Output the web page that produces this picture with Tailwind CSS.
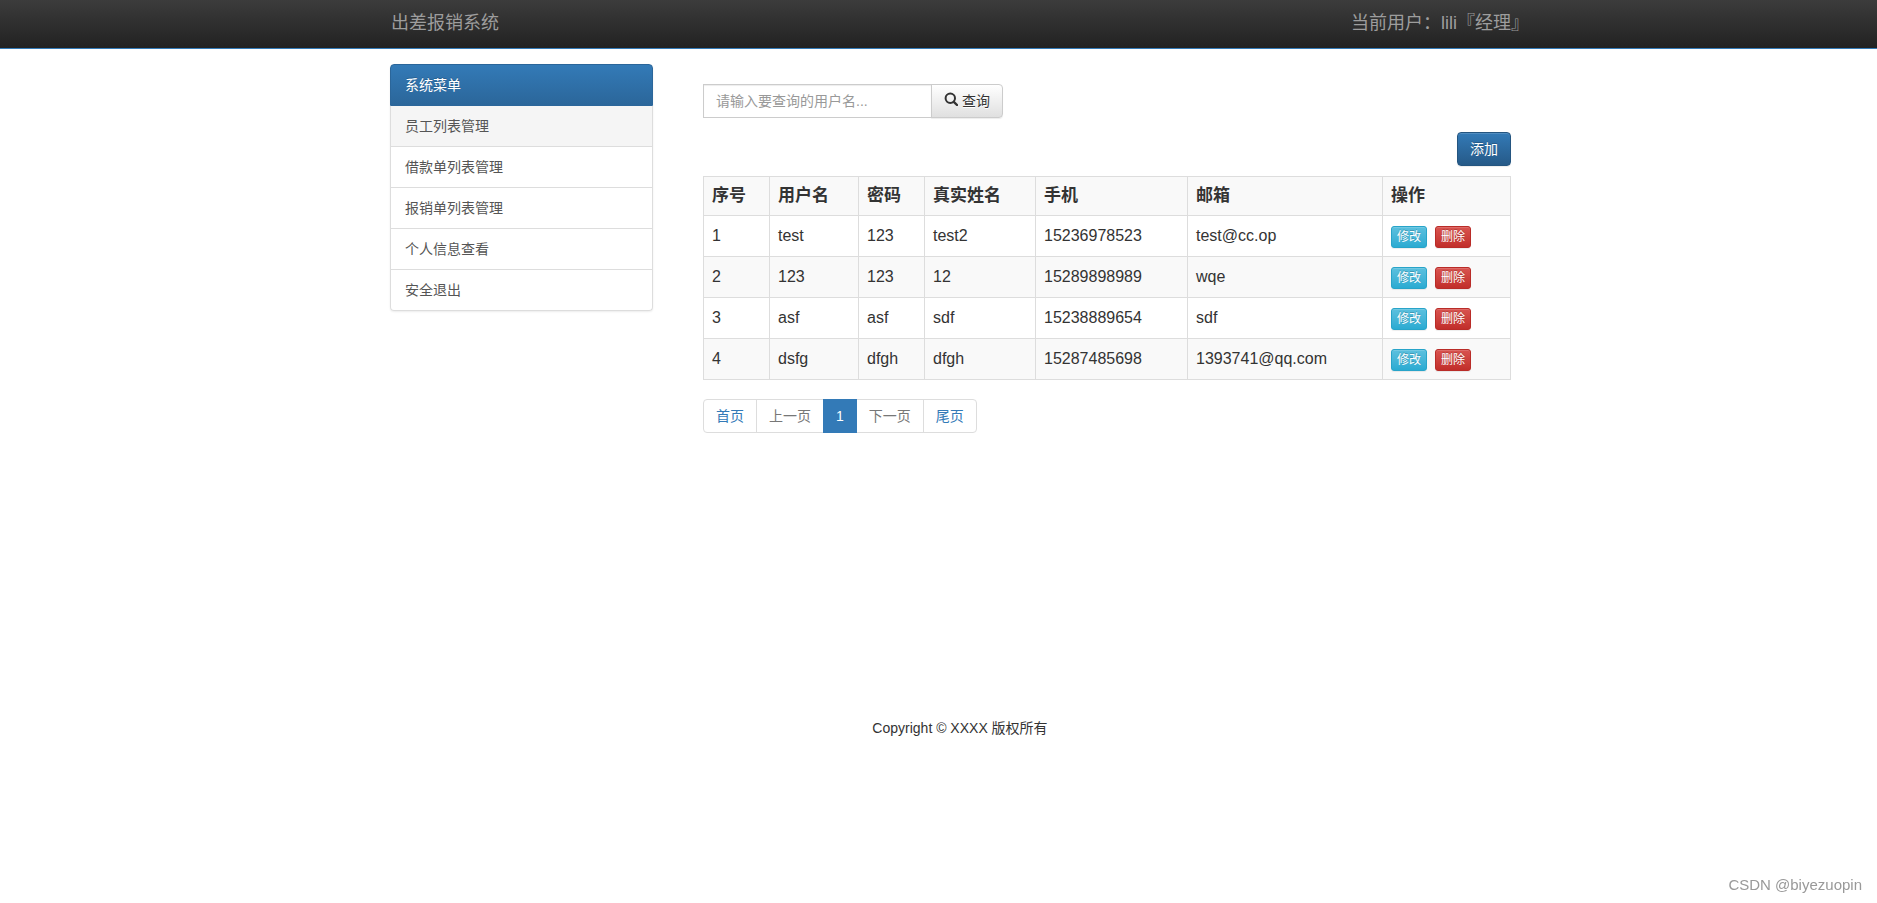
<!DOCTYPE html>
<html lang="zh-CN">
<head>
<meta charset="utf-8">
<title>出差报销系统</title>
<script src="https://cdn.jsdelivr.net/npm/@tailwindcss/browser@4"></script>
</head>
<body class="min-h-screen bg-white font-['Liberation_Sans','Noto_Sans_CJK_SC',sans-serif] text-sm leading-5 text-[#333]">
<header class="border-b border-[#337ab7] bg-linear-to-b from-[#3c3c3c] to-[#222] pl-[43px]">
  <nav class="mx-auto flex h-12 max-w-[1170px] items-center justify-between px-4 pb-[2px] text-lg leading-6 text-[#9d9d9d]">
    <a href="#">出差报销系统</a>
    <p>当前用户：lili『经理』</p>
  </nav>
</header>

<div class="pl-[43px]">
  <div class="mx-auto flex max-w-[1170px] items-start px-[15px] pt-[15px]">
    <aside class="w-[263px] shrink-0 rounded shadow-[0_1px_2px_rgba(0,0,0,0.075)]">
      <h2 class="rounded-t border border-[#2b669a] bg-linear-to-b from-[#337ab7] to-[#2b669a] px-[14px] py-[10px] text-white [text-shadow:0_-1px_0_#286090]">系统菜单</h2>
      <ul class="divide-y divide-[#ddd] rounded-b border border-t-0 border-[#ddd] text-[#555]">
        <li><a href="#" class="block bg-[#f5f5f5] px-[14px] py-[10px]">员工列表管理</a></li>
        <li><a href="#" class="block px-[14px] py-[10px]">借款单列表管理</a></li>
        <li><a href="#" class="block px-[14px] py-[10px]">报销单列表管理</a></li>
        <li><a href="#" class="block px-[14px] py-[10px]">个人信息查看</a></li>
        <li><a href="#" class="block px-[14px] py-[10px]">安全退出</a></li>
      </ul>
    </aside>

    <main class="min-w-0 flex-1 pt-5 pr-[19px] pl-[50px]">
      <form class="flex h-[34px]">
        <input type="text" aria-label="用户名" placeholder="请输入要查询的用户名..." class="w-[229px] border border-[#ccc] px-3 shadow-[inset_0_1px_1px_rgba(0,0,0,0.075)] placeholder:text-[#999]">
        <button type="button" class="-ml-px flex items-center gap-1 rounded-r border border-[#ccc] bg-linear-to-b from-white to-[#e0e0e0] px-3 text-[#333] shadow-[0_1px_1px_rgba(0,0,0,0.075)] [text-shadow:0_1px_0_#fff]">
          <svg class="-mt-1 size-[14px]" viewBox="0 0 14 14" fill="none" stroke="#333" aria-hidden="true"><circle cx="6.3" cy="6.3" r="4.7" stroke-width="2"/><path d="M9.8 9.8 13 13" stroke-width="2.4" stroke-linecap="round"/></svg>
          查询
        </button>
      </form>

      <div class="mt-[14px] flex justify-end">
        <button type="button" class="h-[34px] rounded border border-[#245580] bg-linear-to-b from-[#337ab7] to-[#265a88] px-3 text-white shadow-[inset_0_1px_0_rgba(255,255,255,0.15),0_1px_1px_rgba(0,0,0,0.075)] [text-shadow:0_-1px_0_rgba(0,0,0,0.2)]">添加</button>
      </div>

      <table class="mt-[10px] w-full table-fixed border-collapse text-left text-base leading-6 [&_td]:border [&_td]:border-[#ddd] [&_td]:px-2 [&_td]:pb-px [&_th]:border [&_th]:border-[#ddd] [&_th]:px-2">
        <thead>
          <tr class="h-[39px] bg-[#f9f9f9] text-[17px]">
            <th class="w-[66px]">序号</th>
            <th class="w-[89px]">用户名</th>
            <th class="w-[66px]">密码</th>
            <th class="w-[111px]">真实姓名</th>
            <th class="w-[152px]">手机</th>
            <th class="w-[195px]">邮箱</th>
            <th>操作</th>
          </tr>
        </thead>
        <tbody id="rows"></tbody>
      </table>

      <nav aria-label="分页" class="mt-[19px]">
        <ul class="flex h-[34px] w-max [&_a]:flex [&_a]:h-full [&_a]:items-center [&_a]:border [&_a]:px-3">
          <li><a href="#" class="rounded-l border-[#ddd] text-[#337ab7]">首页</a></li>
          <li class="-ml-px"><a href="#" class="border-[#ddd] text-[#777]">上一页</a></li>
          <li class="z-10 -ml-px"><a href="#" aria-current="page" class="border-[#337ab7] bg-[#337ab7] text-white">1</a></li>
          <li class="-ml-px"><a href="#" class="border-[#ddd] text-[#777]">下一页</a></li>
          <li class="-ml-px"><a href="#" class="rounded-r border-[#ddd] text-[#337ab7]">尾页</a></li>
        </ul>
      </nav>
    </main>
  </div>

  <footer class="mt-[285px] text-center">Copyright © XXXX 版权所有</footer>
</div>

<p class="fixed right-[15px] bottom-2 text-[15px] leading-5 text-[#999]">CSDN @biyezuopin</p>

<template id="row">
  <tr class="h-[41px] odd:bg-white even:bg-[#f9f9f9]">
    <td></td><td></td><td></td><td></td><td></td><td></td>
    <td>
      <div class="flex gap-2 pt-[2px]">
        <button type="button" class="h-[22px] rounded-[3px] border border-[#28a4c9] bg-linear-to-b from-[#5bc0de] to-[#2aabd2] px-[5px] text-xs text-white shadow-[inset_0_1px_0_rgba(255,255,255,0.15),0_1px_1px_rgba(0,0,0,0.075)] [text-shadow:0_-1px_0_rgba(0,0,0,0.2)]">修改</button>
        <button type="button" class="h-[22px] rounded-[3px] border border-[#b92c28] bg-linear-to-b from-[#d9534f] to-[#c12e2a] px-[5px] text-xs text-white shadow-[inset_0_1px_0_rgba(255,255,255,0.15),0_1px_1px_rgba(0,0,0,0.075)] [text-shadow:0_-1px_0_rgba(0,0,0,0.2)]">删除</button>
      </div>
    </td>
  </tr>
</template>
<script>
  const users = [
    ['1', 'test', '123', 'test2', '15236978523', 'test@cc.op'],
    ['2', '123', '123', '12', '15289898989', 'wqe'],
    ['3', 'asf', 'asf', 'sdf', '15238889654', 'sdf'],
    ['4', 'dsfg', 'dfgh', 'dfgh', '15287485698', '1393741@qq.com'],
  ];
  const body = document.getElementById('rows');
  const template = document.getElementById('row');
  for (const user of users) {
    const row = template.content.cloneNode(true);
    const cells = row.querySelectorAll('td');
    user.forEach((value, i) => { cells[i].textContent = value; });
    body.append(row);
  }
</script>
</body>
</html>
